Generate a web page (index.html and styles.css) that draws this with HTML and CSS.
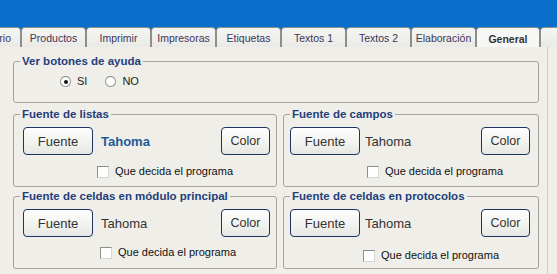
FILE: index.html
```html
<!DOCTYPE html>
<html lang="es">
<head>
<meta charset="utf-8">
<title>General</title>
<link rel="stylesheet" href="styles.css">
</head>
<body>
<div class="titlebar"></div>
<nav class="tabs">
  <div class="tab tab-first">Usuario</div>
  <div class="tab">Productos</div>
  <div class="tab">Imprimir</div>
  <div class="tab">Impresoras</div>
  <div class="tab">Etiquetas</div>
  <div class="tab">Textos 1</div>
  <div class="tab">Textos 2</div>
  <div class="tab">Elaboración</div>
  <div class="tab tab-active">General</div>
  <div class="tab"></div>
</nav>
<main class="panel">
  <fieldset class="group group-help">
    <legend>Ver botones de ayuda</legend>
    <div class="radios">
      <label class="radio"><span class="radio-dot checked"></span>SI</label>
      <label class="radio"><span class="radio-dot"></span>NO</label>
    </div>
  </fieldset>
  <div class="grid">
    <fieldset class="group left">
      <legend>Fuente de listas</legend>
      <div class="row">
        <button class="btn btn-font">Fuente</button>
        <span class="font-name bold">Tahoma</span>
        <button class="btn btn-color">Color</button>
      </div>
      <label class="check c1"><span class="box"></span>Que decida el programa</label>
    </fieldset>
    <fieldset class="group right">
      <legend>Fuente de campos</legend>
      <div class="row">
        <button class="btn btn-font">Fuente</button>
        <span class="font-name">Tahoma</span>
        <button class="btn btn-color">Color</button>
      </div>
      <label class="check c2"><span class="box"></span>Que decida el programa</label>
    </fieldset>
    <fieldset class="group left">
      <legend>Fuente de celdas en módulo principal</legend>
      <div class="row">
        <button class="btn btn-font">Fuente</button>
        <span class="font-name">Tahoma</span>
        <button class="btn btn-color">Color</button>
      </div>
      <label class="check c3"><span class="box"></span>Que decida el programa</label>
    </fieldset>
    <fieldset class="group right">
      <legend>Fuente de celdas en protocolos</legend>
      <div class="row">
        <button class="btn btn-font">Fuente</button>
        <span class="font-name">Tahoma</span>
        <button class="btn btn-color">Color</button>
      </div>
      <label class="check c4"><span class="box"></span>Que decida el programa</label>
    </fieldset>
  </div>
</main>
</body>
</html>
```
FILE: styles.css
```css
* { box-sizing: border-box; }
html, body { margin: 0; padding: 0; }
body {
  width: 557px;
  height: 274px;
  overflow: hidden;
  background: #efeee8;
  font-family: "Liberation Sans", Arial, sans-serif;
  color: #333;
}
.titlebar {
  height: 27px;
  background: #0a6fcb;
}
.tabs {
  display: flex;
  height: 20px;
  background: #0a6fcb;
  overflow: hidden;
  white-space: nowrap;
}
.tab {
  flex: 0 0 65px;
  height: 20px;
  border: 1px solid #8d8d8a;
  border-bottom: none;
  border-radius: 4px 4px 0 0;
  background: linear-gradient(#f6f6f4, #e9e9e6);
  color: #3e3658;
  font-size: 10.5px;
  line-height: 20px;
  text-align: center;
}
.tab-first { margin-left: -44px; text-align: right; padding-right: 9px; }
.tab-active {
  background: #f7f7f5;
  font-weight: bold;
  color: #333;
  line-height: 22px;
  flex-basis: 64px;
}
.panel {
  height: 227px;
  width: 548px;
  padding: 8px 0 0 13px;
  border-right: 1px solid #cfcec6;
}
.group {
  margin: 0;
  padding: 0;
  border: 1px solid #a3a29b;
  border-radius: 3px;
  min-width: 0;
}
.group legend {
  font-size: 11.5px;
  line-height: 13px;
  font-weight: bold;
  color: #1f3e7c;
  padding: 0 2px;
  margin-left: 6px;
}
.group-help { width: 526px; }
.radios {
  display: flex;
  padding: 7px 0 14px 46px;
  font-size: 11px;
  line-height: 13px;
  color: #222;
}
.radio { display: flex; align-items: center; margin-right: 18px; }
.radio-dot {
  width: 11px;
  height: 11px;
  border-radius: 50%;
  border: 1px solid #9a9a96;
  border-top-color: #7c7c78;
  background: radial-gradient(circle, #ffffff 55%, #e4e4e0);
  margin-right: 6px;
  display: flex;
  align-items: center;
  justify-content: center;
}
.radio-dot.checked::after {
  content: "";
  width: 4px;
  height: 4px;
  border-radius: 50%;
  background: #111;
}
.grid {
  margin-top: 5px;
  width: 526px;
  display: grid;
  grid-template-columns: 264px 256px;
  column-gap: 6px;
  row-gap: 3px;
}
.row {
  display: flex;
  align-items: center;
  padding-top: 6px;
}
.left .row { padding-left: 9px; padding-right: 6px; }
.right .row { padding-left: 6px; padding-right: 8px; }
.btn {
  height: 28px;
  border: 1px solid #1b3560;
  border-radius: 4px;
  background: linear-gradient(#fefefe, #f1f1ee 60%, #e6e6e2);
  font-family: "Liberation Sans", Arial, sans-serif;
  font-size: 13px;
  color: #333;
  padding: 0;
}
.btn-font { width: 70px; }
.btn-color { width: 49px; margin-left: auto; font-size: 12.5px; }
.font-name {
  font-size: 13px;
  color: #333;
  margin-left: 8px;
}
.right .font-name { margin-left: 5px; }
.font-name.bold { font-weight: bold; color: #1d5c98; }
.check {
  display: flex;
  align-items: center;
  margin-top: 10px;
  padding-bottom: 8px;
  font-size: 11px;
  line-height: 13px;
  color: #111;
}
.box {
  width: 12px;
  height: 12px;
  border: 1px solid #8e8e8a;
  border-right-color: #d6d6d2;
  border-bottom-color: #d6d6d2;
  background: #fff;
  margin-right: 6px;
}
.c1 { margin-left: 83px; }
.c2 { margin-left: 83px; }
.c3 { margin-left: 86px; margin-top: 9px; padding-bottom: 9px; }
.c4 { margin-left: 79px; margin-top: 12px; padding-bottom: 6px; }
```
